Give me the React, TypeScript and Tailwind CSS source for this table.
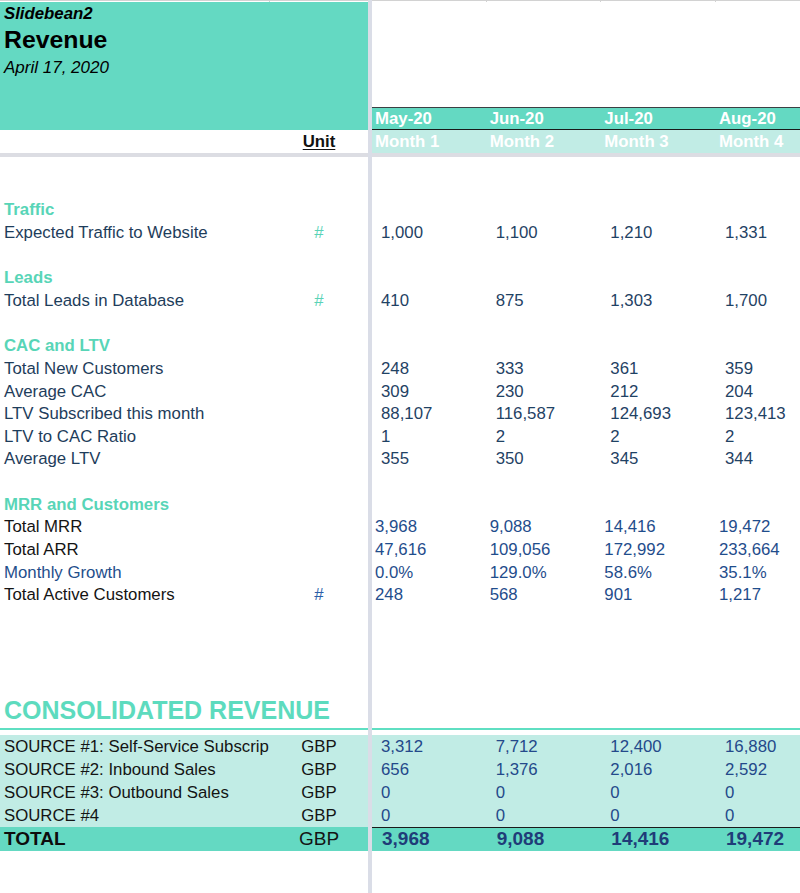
type Tone = 'navy' | 'black' | 'blue' | 'source' | 'total'

interface RowDef {
  h: string
  section?: string
  title?: string
  line?: boolean
  label?: string
  unit?: string
  values?: string[]
  tone?: Tone
}

const H = 'h-[22.65px]'

const tones: Record<Tone, { bg: string; label: string; unit: string; value: string; right: string }> = {
  navy: {
    bg: '',
    label: 'text-[#1e3d5b]',
    unit: 'text-[#5ad3b7]',
    value: 'pl-[9px] text-[#1f4264]',
    right: '',
  },
  black: {
    bg: '',
    label: 'text-[#141414]',
    unit: 'text-[#2b5ea8]',
    value: 'pl-[3px] text-[#1f4d8c]',
    right: '',
  },
  blue: {
    bg: '',
    label: 'text-[#1f4f8c]',
    unit: 'text-[#2b5ea8]',
    value: 'pl-[3px] text-[#1f4d8c]',
    right: '',
  },
  source: {
    bg: 'bg-[#c1ece5]',
    label: 'text-[#141414]',
    unit: 'text-[#141414]',
    value: 'pl-[9px] text-[#24498a]',
    right: '',
  },
  total: {
    bg: 'bg-[#64d9c2]',
    label: 'font-bold text-[19px] text-[#0d0d0d]',
    unit: 'text-[19px] text-[#141414]',
    value: 'pl-[10px] font-bold text-[19px] text-[#1f3c78]',
    right: 'border-t-[1.5px] border-[#1a1a1a]',
  },
}

const rows: RowDef[] = [
  { h: 'h-[42px]' },
  { h: H, section: 'Traffic' },
  { h: H, label: 'Expected Traffic to Website', unit: '#', values: ['1,000', '1,100', '1,210', '1,331'], tone: 'navy' },
  { h: H },
  { h: H, section: 'Leads' },
  { h: H, label: 'Total Leads in Database', unit: '#', values: ['410', '875', '1,303', '1,700'], tone: 'navy' },
  { h: H },
  { h: H, section: 'CAC and LTV' },
  { h: H, label: 'Total New Customers', values: ['248', '333', '361', '359'], tone: 'navy' },
  { h: H, label: 'Average CAC', values: ['309', '230', '212', '204'], tone: 'navy' },
  { h: H, label: 'LTV Subscribed this month', values: ['88,107', '116,587', '124,693', '123,413'], tone: 'navy' },
  { h: H, label: 'LTV to CAC Ratio', values: ['1', '2', '2', '2'], tone: 'navy' },
  { h: H, label: 'Average LTV', values: ['355', '350', '345', '344'], tone: 'navy' },
  { h: H },
  { h: H, section: 'MRR and Customers' },
  { h: H, label: 'Total MRR', values: ['3,968', '9,088', '14,416', '19,472'], tone: 'black' },
  { h: H, label: 'Total ARR', values: ['47,616', '109,056', '172,992', '233,664'], tone: 'black' },
  { h: H, label: 'Monthly Growth', values: ['0.0%', '129.0%', '58.6%', '35.1%'], tone: 'blue' },
  { h: H, label: 'Total Active Customers', unit: '#', values: ['248', '568', '901', '1,217'], tone: 'black' },
  { h: 'h-[86.6px]' },
  { h: 'h-[35px]', title: 'CONSOLIDATED REVENUE' },
  { h: 'h-[2px]', line: true },
  { h: 'h-[5px]' },
  { h: 'h-[23px]', label: 'SOURCE #1: Self-Service Subscrip', unit: 'GBP', values: ['3,312', '7,712', '12,400', '16,880'], tone: 'source' },
  { h: 'h-[23px]', label: 'SOURCE #2: Inbound Sales', unit: 'GBP', values: ['656', '1,376', '2,016', '2,592'], tone: 'source' },
  { h: 'h-[23px]', label: 'SOURCE #3: Outbound Sales', unit: 'GBP', values: ['0', '0', '0', '0'], tone: 'source' },
  { h: 'h-[23px]', label: 'SOURCE #4', unit: 'GBP', values: ['0', '0', '0', '0'], tone: 'source' },
  { h: 'h-[24.5px]', label: 'TOTAL', unit: 'GBP', values: ['3,968', '9,088', '14,416', '19,472'], tone: 'total' },
]

const months = [
  ['May-20', 'Month 1'],
  ['Jun-20', 'Month 2'],
  ['Jul-20', 'Month 3'],
  ['Aug-20', 'Month 4'],
]

function LeftRow({ row }: { row: RowDef }) {
  if (row.line) return <div className={`${row.h} bg-[#5fdfc2]`} />
  if (row.title) {
    return (
      <div className={`${row.h} flex items-center pl-[4px] text-[25px] font-bold leading-none text-[#5ddbbe]`}>
        {row.title}
      </div>
    )
  }
  if (row.section) {
    return (
      <div className={`${row.h} flex items-center pl-[4px] font-bold text-[#58d5b7]`}>{row.section}</div>
    )
  }
  if (!row.label || !row.tone) return <div className={row.h} />
  const t = tones[row.tone]
  return (
    <div className={`${row.h} ${t.bg} flex items-center`}>
      <div className={`w-[270px] shrink-0 overflow-hidden whitespace-nowrap pl-[4px] ${t.label}`}>{row.label}</div>
      <div className={`w-[98px] shrink-0 text-center ${t.unit}`}>{row.unit}</div>
    </div>
  )
}

function RightRow({ row }: { row: RowDef }) {
  if (row.line) return <div className={`${row.h} bg-[#5fdfc2]`} />
  if (!row.values || !row.tone) return <div className={row.h} />
  const t = tones[row.tone]
  return (
    <div className={`${row.h} ${t.bg} ${t.right} flex items-center`}>
      {row.values.map((v, i) => (
        <div key={i} className={`w-[114.67px] shrink-0 whitespace-nowrap ${t.value}`}>
          {v}
        </div>
      ))}
    </div>
  )
}

export default function App() {
  return (
    <div className="flex h-[893px] w-[800px] overflow-hidden bg-white font-['Liberation_Sans',Arial,sans-serif] text-[16.8px]">
      {/* frozen label column */}
      <div className="w-[368px] shrink-0">
        <div className="flex h-[2px]">
          <div className="w-[270px] border-t border-r border-[#d2d2d2]" />
          <div className="flex-1 border-t border-[#d2d2d2]" />
        </div>
        <div className="h-[128px] bg-[#64d9c2] pl-[4px] text-black">
          <div className="pt-[1px] text-[16.8px] font-bold italic leading-[22px]">Slidebean2</div>
          <div className="text-[24.8px] font-bold leading-[30px]">Revenue</div>
          <div className="mt-[2px] text-[17px] italic leading-[22px]">April 17, 2020</div>
        </div>
        <div className="flex h-[23.3px] items-center">
          <div className="w-[270px]" />
          <div className="w-[98px] text-center font-bold text-[#111111] underline underline-offset-2">Unit</div>
        </div>
        <div className="h-[3.4px] bg-[#dcdde3]" />
        {rows.map((r, i) => (
          <LeftRow key={i} row={r} />
        ))}
      </div>

      {/* frozen pane divider */}
      <div className="w-[4px] shrink-0 bg-[#dadde7]" />

      {/* month columns */}
      <div className="w-[428px] shrink-0 overflow-hidden">
        <div className="flex h-[2px]">
          {months.map((m) => (
            <div key={m[0]} className="w-[114.67px] shrink-0 border-t border-r border-[#d2d2d2]" />
          ))}
        </div>
        <div className="h-[104.5px]" />
        <div className="flex h-[23.5px] items-center border-t-[1.5px] border-b-[1.5px] border-t-[#3c4043] border-b-[#1a1a1a] bg-[#64d9c2] font-bold text-white">
          {months.map((m) => (
            <div key={m[0]} className="w-[114.67px] shrink-0 pl-[3px]">
              {m[0]}
            </div>
          ))}
        </div>
        <div className="flex h-[23.3px] items-center bg-[#c1ece5] font-bold text-white">
          {months.map((m) => (
            <div key={m[1]} className="w-[114.67px] shrink-0 pl-[3px]">
              {m[1]}
            </div>
          ))}
        </div>
        <div className="h-[3.4px] bg-[#dcdde3]" />
        {rows.map((r, i) => (
          <RightRow key={i} row={r} />
        ))}
      </div>
    </div>
  )
}
